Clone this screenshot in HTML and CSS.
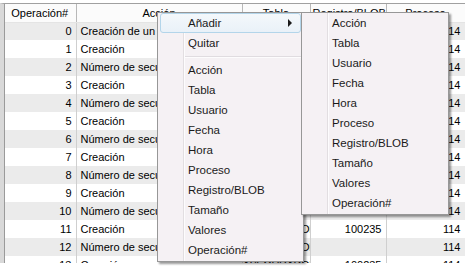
FILE: index.html
```html
<!DOCTYPE html>
<html lang="es">
<head>
    <meta charset="UTF-8">
    <meta name="viewport" content="width=device-width, initial-scale=1.0">
    <title>Operaciones</title>
    <link rel="stylesheet" href="styles.css">
</head>
<body>
<div class="pane">
    <table class="grid">
        <colgroup>
            <col class="c-op"><col class="c-acc"><col class="c-tab"><col class="c-reg"><col class="c-proc">
        </colgroup>
        <thead>
            <tr><th>Operación#</th><th>Acción</th><th>Tabla</th><th>Registro/BLOB</th><th>Proceso</th></tr>
        </thead>
        <tbody id="rows"></tbody>
    </table>
</div>

<div class="menu main-menu">
    <div class="item active">Añadir<span class="arrow"></span></div>
    <div class="item">Quitar</div>
    <div class="sep"></div>
    <div class="item">Acción</div>
    <div class="item">Tabla</div>
    <div class="item">Usuario</div>
    <div class="item">Fecha</div>
    <div class="item">Hora</div>
    <div class="item">Proceso</div>
    <div class="item">Registro/BLOB</div>
    <div class="item">Tamaño</div>
    <div class="item">Valores</div>
    <div class="item">Operación#</div>
</div>

<div class="menu sub-menu">
    <div class="item">Acción</div>
    <div class="item">Tabla</div>
    <div class="item">Usuario</div>
    <div class="item">Fecha</div>
    <div class="item">Hora</div>
    <div class="item">Proceso</div>
    <div class="item">Registro/BLOB</div>
    <div class="item">Tamaño</div>
    <div class="item">Valores</div>
    <div class="item">Operación#</div>
</div>

<script>
    let tbody = document.getElementById('rows');
    for (let i = 0; i < 14; i++) {
        let accion = i == 0 ? "Creación de un objeto" : (i % 2 ? "Creación" : "Número de secuencia");
        let reg = i == 12 ? "" : "100235";
        let tr = document.createElement('tr');
        tr.innerHTML = '<td class="num">' + i + '</td><td>' + accion + '</td><td class="tab">ASEGURADOR</td>' +
            '<td class="num">' + reg + '</td><td class="num">114</td>';
        tbody.appendChild(tr);
    }
</script>
</body>
</html>
```

FILE: styles.css
```css
* {
    margin: 0;
    padding: 0;
    box-sizing: border-box;
}
body {
    background: #fff;
    font-family: "Liberation Sans", Arial, sans-serif;
    font-size: 11px;
    color: #000;
    padding-top: 3px;
}
.pane {
    height: 260px;
    overflow: hidden;
    border-left: 4px solid #d9d9d9;
    border-top: 1px solid #a0a0a0;
    position: relative;
}
.pane::before {
    content: "";
    position: absolute;
    left: 0;
    top: 0;
    bottom: 0;
    width: 1px;
    background: #9a9a9a;
}
.grid {
    table-layout: fixed;
    border-collapse: collapse;
    width: 461px;
}
.c-op { width: 72px; }
.c-acc { width: 166px; }
.c-tab { width: 68px; }
.c-reg { width: 76px; }
.c-proc { width: 79px; }
.grid th {
    height: 18px;
    font-weight: normal;
    background: #fbfbfb;
    border-right: 1px solid #b8b8b8;
    border-bottom: 1px solid #e4e4e4;
    white-space: nowrap;
    overflow: hidden;
    padding: 0 2px;
}
.grid td {
    height: 18px;
    border-right: 1px solid #cfcfcf;
    white-space: nowrap;
    overflow: hidden;
    padding: 0 3px 0 4px;
}
.grid tbody tr:nth-child(odd) td {
    background: #ebebeb;
}
.grid td.num {
    text-align: right;
    padding: 0 4px 0 2px;
}
.grid td.tab {
    text-align: right;
    letter-spacing: -0.4px;
    padding: 0 1px 0 0;
}

.menu {
    position: absolute;
    top: 12px;
    background: #f5f1f4 linear-gradient(to right, transparent 25px, #e2dee1 25px, #e2dee1 26px, #fdfcfd 26px, #fdfcfd 27px, transparent 27px);
    border: 1px solid #979797;
    box-shadow: 2px 2px 2px rgba(0, 0, 0, 0.4);
    padding: 0 2px 1px;
    font-size: 11.5px;
    color: #1a1a1a;
}
.main-menu {
    left: 157px;
    width: 147px;
}
.sub-menu {
    left: 301px;
    width: 148px;
}
.item {
    position: relative;
    height: 20px;
    line-height: 18px;
    padding-left: 27px;
    border: 1px solid transparent;
    border-radius: 3px;
}
.item.active {
    border-color: #b3d5ea;
    background: linear-gradient(#f4f8fb, #e9f1f8);
}
.arrow {
    position: absolute;
    right: 8px;
    top: 5px;
    border-left: 4px solid #1a1a1a;
    border-top: 4px solid transparent;
    border-bottom: 4px solid transparent;
}
.sep {
    height: 7px;
    margin-left: 25px;
    background: linear-gradient(transparent 3px, #e0dce0 3px, #e0dce0 4px, #fdfcfd 4px, #fdfcfd 5px, transparent 5px);
}
```
